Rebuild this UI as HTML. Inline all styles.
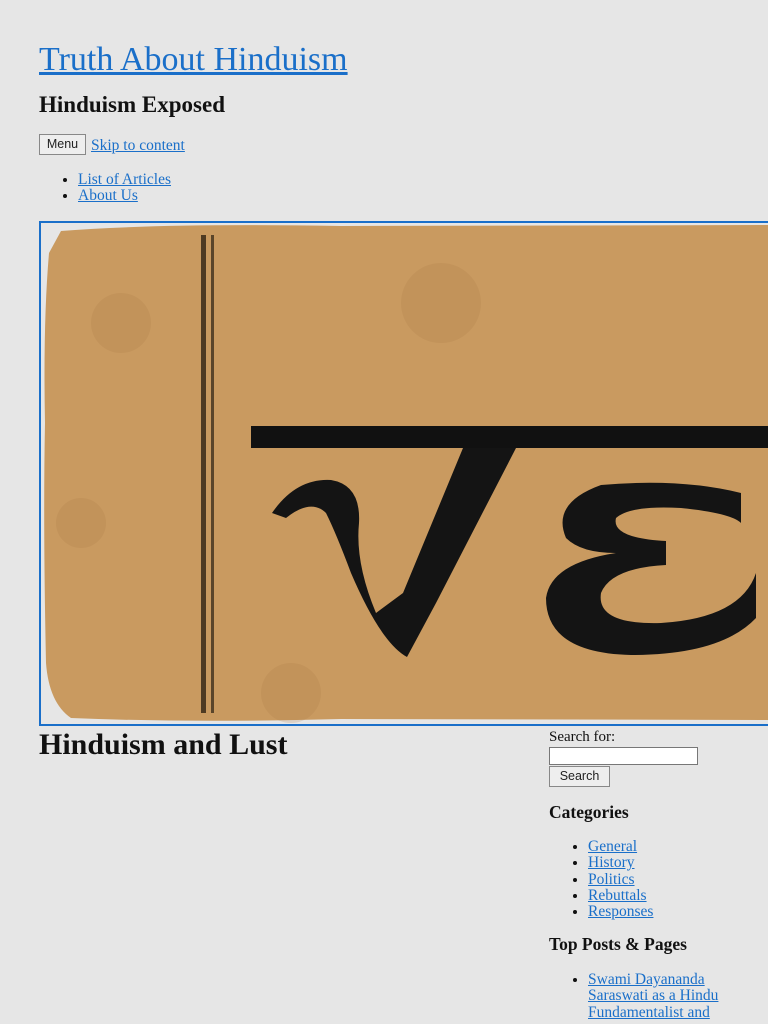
<!DOCTYPE html>
<html><head><meta charset="utf-8"><style>
body{margin:0;background:#e6e6e6;font-family:"Liberation Serif",serif;color:#111;width:768px;height:1024px;overflow:hidden;position:relative}
a{color:#1a6fc9}
.abs{position:absolute;white-space:nowrap}
ul{margin:0;padding:0 0 0 39px;list-style:disc;font-size:15.5px;line-height:16.3px}
.btn{position:absolute;background:#eee;border:1px solid #888;font-family:"Liberation Sans",sans-serif;font-size:12.5px;color:#222;text-align:center;line-height:18px}
</style></head><body>
<div class="abs" style="left:39px;top:40px;font-size:34px;line-height:40px"><a href="#">Truth About Hinduism</a></div>
<div class="abs" style="left:39px;top:92px;font-size:23px;font-weight:bold;line-height:26px">Hinduism Exposed</div>
<div class="btn" style="left:39px;top:134px;width:45px;height:19px">Menu</div>
<div class="abs" style="left:91px;top:137px;font-size:15.5px"><a href="#">Skip to content</a></div>
<ul class="abs" style="left:39px;top:172px"><li><a href="#">List of Articles</a></li><li><a href="#">About Us</a></li></ul>
<div class="abs" style="left:39px;top:221px;width:740px;height:501px;border:2px solid #1a6fc9;overflow:hidden;background:#e6e6e6">
<svg width="740" height="501" viewBox="0 0 740 501">
<path d="M20 8 Q120 0 300 3 L740 2 L740 497 L300 496 Q150 500 30 495 Q8 480 5 440 Q2 300 4 200 Q2 100 8 30 Z" fill="#c99a60"/>
<g fill="#a87a45" opacity="0.2"><circle cx="80" cy="100" r="30"/><circle cx="400" cy="80" r="40"/><circle cx="40" cy="300" r="25"/><circle cx="250" cy="470" r="30"/></g>
<rect x="160" y="12" width="5" height="478" fill="#4e3a22"/>
<rect x="170" y="12" width="3" height="478" fill="#5a452a"/>
<rect x="210" y="203" width="530" height="22" fill="#111"/>
<path d="M231 290 Q255 255 290 257 Q320 262 318 300 Q314 340 335 390 L362 370 L422 225 L475 225 L395 380 L366 434 Q340 420 310 350 Q295 310 285 290 Q270 275 245 295 Z" fill="#141414"/>
<path d="M700 270 Q640 255 560 262 Q510 280 525 315 Q540 330 575 330 Q510 340 505 375 Q505 430 590 432 Q680 432 715 395 L715 350 Q700 395 620 400 Q555 402 560 370 Q570 345 625 342 L625 318 Q570 315 575 295 Q590 282 640 285 Q690 290 700 300 Z" fill="#141414"/>
</svg></div>
<div class="abs" style="left:39px;top:728px;font-size:30px;font-weight:bold;line-height:34px">Hinduism and Lust</div>
<div class="abs" style="left:549px;top:729px;font-size:15px">Search for:</div>
<div class="abs" style="left:549px;top:747px;width:147px;height:16px;background:#fff;border:1px solid #777"></div>
<div class="btn" style="left:549px;top:766px;width:59px;height:19px">Search</div>
<div class="abs" style="left:549px;top:802px;font-size:17.5px;font-weight:bold">Categories</div>
<ul class="abs" style="left:549px;top:839px"><li><a href="#">General</a></li><li><a href="#">History</a></li><li><a href="#">Politics</a></li><li><a href="#">Rebuttals</a></li><li><a href="#">Responses</a></li></ul>
<div class="abs" style="left:549px;top:934px;font-size:17.5px;font-weight:bold">Top Posts &amp; Pages</div>
<ul class="abs" style="left:549px;top:972px"><li><a href="#">Swami Dayananda<br>Saraswati as a Hindu<br>Fundamentalist and</a></li></ul>
</body></html>
